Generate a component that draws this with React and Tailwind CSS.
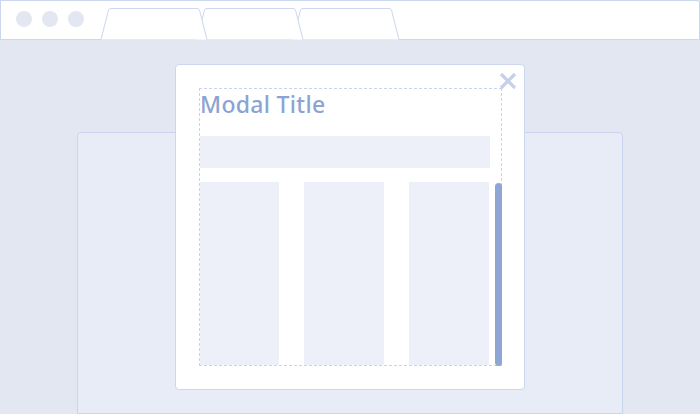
const Tab = ({ x }) => (
  <path
    d={`M ${x} 39.5 L ${x + 7.5} 10 Q ${x + 8} 8.5 ${x + 10} 8.5 L ${x + 96} 8.5 Q ${x + 98} 8.5 ${x + 98.5} 10 L ${x + 106} 39.5`}
    fill="#ffffff"
    stroke="#cbd6ef"
    strokeWidth="1"
  />
);

const App = () => {
  return (
    <div
      className="relative w-[700px] h-[414px] overflow-hidden bg-[#e3e7f1]"
      style={{ fontFamily: '"Noto Sans", "Open Sans", sans-serif' }}
    >
      {/* Browser chrome */}
      <div className="relative h-[40px] bg-white border border-[#cbd6ef] rounded-tr-[3px] flex items-center gap-[10px] pl-[15px] pb-[2px]">
        <span className="w-4 h-4 rounded-full bg-[#e2e7f1]" />
        <span className="w-4 h-4 rounded-full bg-[#e2e7f1]" />
        <span className="w-4 h-4 rounded-full bg-[#e2e7f1]" />
        <svg className="absolute left-0 top-[-1px]" width="420" height="41" viewBox="0 0 420 41">
          <Tab x={292} />
          <Tab x={196} />
          <Tab x={100} />
        </svg>
      </div>

      {/* Page behind modal */}
      <div className="flex justify-center pt-[92px]">
        <div className="w-[546px] h-[282px] bg-[#e8ecf6] border border-[#c9d4ee] rounded-t-[4px]" />
      </div>

      {/* Modal */}
      <div className="absolute left-[175px] top-[64px] w-[350px] h-[326px] bg-white border border-[#ccd6ee] rounded-[4px] p-[23px]">
        <svg className="absolute right-[7px] top-[7px]" width="18" height="18" viewBox="0 0 18 18">
          <path d="M2 2 L16 16 M16 2 L2 16" stroke="#c6d0ea" strokeWidth="3.2" strokeLinecap="butt" />
        </svg>

        <div className="relative w-[303px] h-[278px] border border-dashed border-[#c9d3ee] flex flex-col">
          <div className="h-[47px] pt-[4px]">
            <h1 className="text-[23px] leading-none font-medium text-[#8ca3d3] tracking-[0.3px]">Modal Title</h1>
          </div>
          <div className="w-[290px] h-[32px] bg-[#edf0f8]" />
          <div className="flex-1 mt-[14px] flex gap-[25px]">
            <div className="w-[79px] bg-[#edf0f8]" />
            <div className="w-[80px] bg-[#edf0f8]" />
            <div className="w-[80px] bg-[#edf0f8]" />
          </div>
          <div className="absolute right-[-1px] bottom-[-1px] w-[7px] h-[183px] rounded-full bg-[#8fa5d3]" />
        </div>
      </div>
    </div>
  );
};

export default App;
